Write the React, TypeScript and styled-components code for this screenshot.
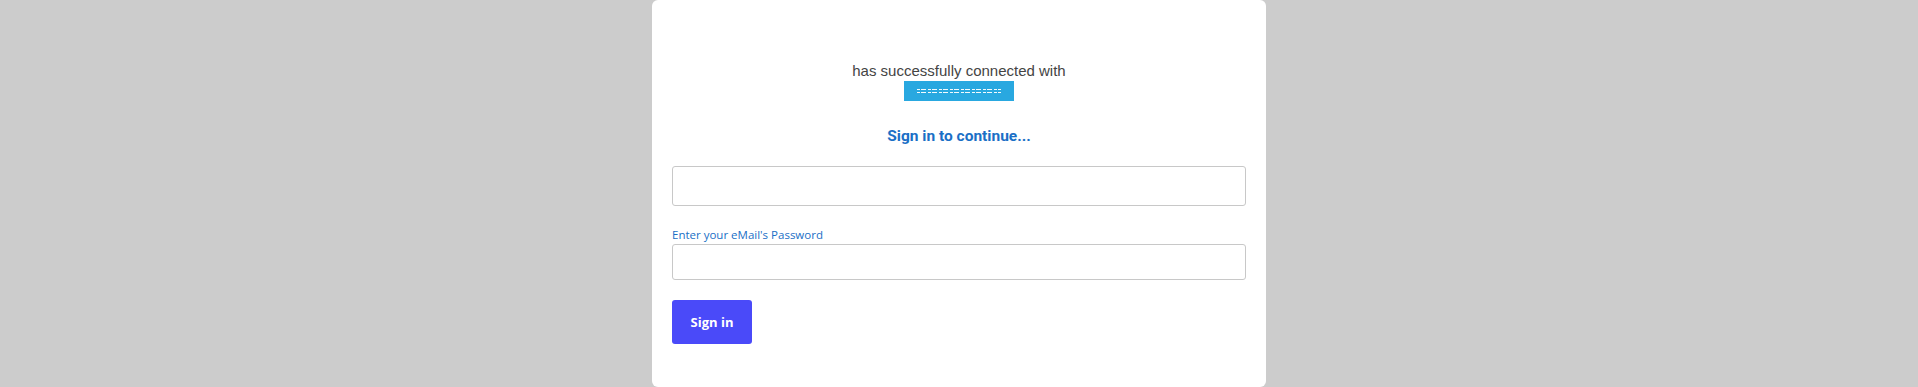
import React from "react";
import styled, { createGlobalStyle } from "styled-components";

const GlobalStyle = createGlobalStyle`
  html, body {
    margin: 0;
    padding: 0;
    background: #cccccc;
  }
  body {
    font-family: "Liberation Sans", Arial, sans-serif;
  }
  * { box-sizing: border-box; }
`;

const Page = styled.div`
  display: flex;
  justify-content: center;
  height: 387px;
  overflow: hidden;
`;

const Card = styled.div`
  width: 614px;
  height: 387px;
  background: #ffffff;
  border-radius: 6px;
  padding: 61px 20px 0;
  display: flex;
  flex-direction: column;
`;

const Connected = styled.div`
  display: flex;
  flex-direction: column;
  align-items: center;
`;

const ConnectedText = styled.p`
  margin: 0;
  font-family: "Liberation Sans", Arial, sans-serif;
  font-size: 15px;
  line-height: 19px;
  color: #444444;
`;

const AppBadge = styled.div`
  margin-top: 1px;
  width: 110px;
  height: 20px;
  background: #29a8e0;
  display: flex;
  flex-direction: column;
  align-items: center;
  justify-content: center;
  gap: 2px;
`;

const BadgeLine = styled.span<{ $w: number }>`
  display: block;
  width: ${(p) => p.$w}px;
  height: 1px;
  background-image: repeating-linear-gradient(
    to right,
    rgba(255, 255, 255, 0.95) 0 3px,
    transparent 3px 4px,
    rgba(255, 255, 255, 0.95) 4px 9px,
    transparent 9px 11px
  );
`;

const Title = styled.h2`
  margin: 26px 0 0;
  text-align: center;
  font-family: Roboto, "Liberation Sans", Arial, sans-serif;
  font-weight: 700;
  font-size: 15.5px;
  line-height: 19px;
  color: #1a6fc6;
`;

const Field = styled.input<{ $h: number }>`
  display: block;
  width: 100%;
  height: ${(p) => p.$h}px;
  border: 1px solid #c8c8c8;
  border-radius: 3px;
  background: #fff;
  padding: 0 10px;
  font-size: 14px;
  outline: none;
`;

const FirstField = styled(Field)`
  margin-top: 20px;
`;

const Label = styled.label`
  display: block;
  margin-top: 22px;
  margin-bottom: 2px;
  font-family: "Open Sans", "Noto Sans", sans-serif;
  font-weight: 500;
  font-size: 11.5px;
  line-height: 14px;
  color: #1a6fc6;
`;

const Button = styled.button`
  margin-top: 20px;
  width: 80px;
  height: 44px;
  border: none;
  border-radius: 3px;
  background: #4a4af9;
  color: #ffffff;
  font-family: "Open Sans", "Noto Sans", sans-serif;
  font-weight: 700;
  font-size: 13px;
  cursor: pointer;
  align-self: flex-start;
`;

export default function App() {
  return (
    <>
      <GlobalStyle />
      <Page>
        <Card>
          <Connected>
            <ConnectedText>has successfully connected with</ConnectedText>
            <AppBadge>
              <BadgeLine $w={84} />
              <BadgeLine $w={84} />
            </AppBadge>
          </Connected>
          <Title>Sign in to continue...</Title>
          <FirstField $h={40} type="text" aria-label="eMail" />
          <Label>Enter your eMail's Password</Label>
          <Field $h={36} type="password" aria-label="Password" />
          <Button type="button">Sign in</Button>
        </Card>
      </Page>
    </>
  );
}
